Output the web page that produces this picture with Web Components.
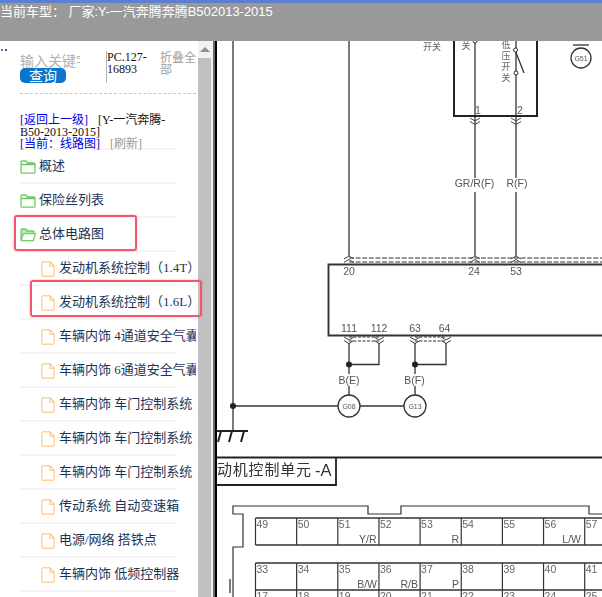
<!DOCTYPE html>
<html lang="zh">
<head>
<meta charset="utf-8">
<title>线路图</title>
<style>
html,body{margin:0;padding:0;background:#fff;height:100%;overflow:hidden}
body{font-family:"Liberation Serif","Noto Sans CJK SC",serif}
</style>
</head>
<body>
<app-shell>
  <top-bar slot="top">当前车型： 厂家:Y-一汽奔腾奔腾B502013-2015</top-bar>
  <side-panel slot="side">
    <tree-item kind="folder">概述</tree-item>
    <tree-item kind="folder">保险丝列表</tree-item>
    <tree-item kind="open" mark="folder">总体电路图</tree-item>
    <tree-item kind="file">发动机系统控制（1.4T）</tree-item>
    <tree-item kind="file" mark="file">发动机系统控制（1.6L）</tree-item>
    <tree-item kind="file">车辆内饰 4通道安全气囊</tree-item>
    <tree-item kind="file">车辆内饰 6通道安全气囊</tree-item>
    <tree-item kind="file">车辆内饰 车门控制系统</tree-item>
    <tree-item kind="file">车辆内饰 车门控制系统</tree-item>
    <tree-item kind="file">车辆内饰 车门控制系统</tree-item>
    <tree-item kind="file">传动系统 自动变速箱</tree-item>
    <tree-item kind="file">电源/网络 搭铁点</tree-item>
    <tree-item kind="file">车辆内饰 低频控制器</tree-item>
  </side-panel>
  <panel-scrollbar slot="bar"></panel-scrollbar>
  <wiring-diagram slot="main"></wiring-diagram>
</app-shell>
<script>
function shadow(el, html){ el.attachShadow({mode:'open'}).innerHTML = html; }

customElements.define('app-shell', class extends HTMLElement{
  constructor(){super();shadow(this,`<style>
    :host{display:grid;width:100%;height:100vh;overflow:hidden;grid-template-columns:198px 15px 2px 2px 1fr;grid-template-rows:41px 1fr}
    .top{grid-column:1/-1;grid-row:1;display:block}
    .side{grid-column:1;grid-row:2;position:relative;z-index:2}
    .g{grid-column:3;grid-row:2;background:#6a6a6a}
    .k{grid-column:4;grid-row:2;background:#000}
    .main{grid-column:5;grid-row:2;min-width:0;overflow:hidden}
    </style>
    <div class="top"><slot name="top"></slot></div>
    <div class="side"><slot name="side"></slot></div>
    <div style="grid-column:2;grid-row:2;min-height:0"><slot name="bar"></slot></div>
    <div class="g"></div><div class="k"></div>
    <div class="main"><slot name="main"></slot></div>`);}
});

customElements.define('top-bar', class extends HTMLElement{
  constructor(){super();shadow(this,`<style>
    :host{display:block;height:41px;box-sizing:border-box;background:#999;border-top:3px solid #5b7fd3;
      color:#fff;font:13px/16px "Liberation Sans","Noto Sans CJK SC",sans-serif;white-space:pre}
    div{padding:1px 0 0 0;letter-spacing:-.02px}
    </style><div><slot></slot></div>`);}
});

customElements.define('side-panel', class extends HTMLElement{
  constructor(){super();shadow(this,`<style>
    :host{display:block;height:100%;background:#fff;font:12px/12px "Liberation Serif","Noto Sans CJK SC",serif}
    .head{display:flex;height:42px;padding-top:10px;box-sizing:content-box}
    .dots{width:20px;flex:none;margin-top:-2px;height:3px;display:flex;gap:2px;padding-left:1px;box-sizing:border-box}
    .dots i{width:2px;height:2px}
    .query{width:60px;flex:none;margin-right:26px;display:flex;flex-direction:column}
    .ph{font:14px/18px "Noto Sans CJK SC",sans-serif;color:#b0b0b0;white-space:nowrap;overflow:hidden;height:17px}
    button{all:unset;display:block;width:46px;height:15px;margin-top:0;border-radius:5px;background:#0a75cd;color:#fff;
      text-align:center;font:14px/15px "Noto Sans CJK SC",sans-serif}
    .pc{width:46px;flex:none;border-left:1px solid #b5b5b5;height:32px;padding-left:0;margin-right:7px;color:#111;font:12px/12px "Liberation Serif",serif;box-sizing:content-box}
    .fold{width:37px;flex:none;color:#a0a0a0;font:12px/12px "Noto Sans CJK SC",sans-serif}
    .dash{margin:0 2px 0 20px;border-top:1px dashed #c8c8c8;height:0}
    .links{margin:20px 0 0 20px;width:150px;height:34px;color:#111}
    .links b{display:inline-block;width:10px}
    a{color:#0000e6;text-decoration:none}
    .mute{color:#999}
    .sep{height:2px;width:156px;margin-left:20px;background:#f5f5f5}
    </style>
    <div class="head">
      <div class="dots"><i style="background:#c0407a"></i><i style="background:#4040c0"></i></div>
      <div class="query"><div class="ph">输入关键字</div><button>查询</button></div>
      <div class="pc">PC.127-16893</div>
      <div class="fold">折叠全部</div>
    </div>
    <div class="dash"></div>
    <div class="links"><a href="#">[返回上一级]</a><b></b>[Y-一汽奔腾-B50-2013-2015]<br><a href="#">[当前：线路图]</a><b></b><span class="mute">[刷新]</span></div>
    <div class="sep"></div>
    <slot></slot>`);}
});

const ICONS = {
 folder:`<svg width="16" height="14" viewBox="0 0 16 14"><path d="M1 3V2a1 1 0 0 1 1-1h4l1.5 2H14a1 1 0 0 1 1 1v8.2a1 1 0 0 1-1 1H2a1 1 0 0 1-1-1V3zM1 4.5h14" fill="#fff" stroke="#6fcb66" stroke-width="1.3" stroke-linejoin="round"/></svg>`,
 open:`<svg width="16" height="14" viewBox="0 0 16 14"><path d="M1 12V2a1 1 0 0 1 1-1h4l1.5 2H13a1 1 0 0 1 1 1v1" fill="#b8e6b2" stroke="#6fcb66" stroke-width="1.3" stroke-linejoin="round"/><path d="M1.2 12.6 3.4 5.6H15.4L13.4 12.6z" fill="#fff" stroke="#6fcb66" stroke-width="1.3" stroke-linejoin="round"/></svg>`,
 file:`<svg width="14" height="16" viewBox="0 0 14 16"><path d="M2 .8H9L13.2 5V14a1.2 1.2 0 0 1-1.2 1.2H2A1.2 1.2 0 0 1 .8 14V2A1.2 1.2 0 0 1 2 .8zM8.8 1V5.2H13" fill="#fff" stroke="#fdd09a" stroke-width="1.4" stroke-linejoin="round"/></svg>`
};

customElements.define('tree-item', class extends HTMLElement{
  constructor(){super();
    const kind=this.getAttribute('kind'), mark=this.getAttribute('mark'), child=kind==='file';
    shadow(this,`<style>
    :host{display:block;font:13px/16px "Liberation Serif","Noto Sans CJK SC",serif;color:#1c3557}
    .row{position:relative;height:32px;width:196px;display:flex;align-items:center;box-sizing:border-box;padding-left:${child?41:20}px;gap:${child?4:3}px}
    svg{flex:none;display:block;margin-top:2px}
    .t{flex:1;min-width:0;overflow:hidden;white-space:nowrap}
    .sep{height:2px;width:156px;margin-left:20px;background:#f5f5f5}
    .mark{position:absolute;border:2.5px solid #f4566c;border-radius:3px;box-shadow:0 0 2px rgba(244,86,108,.6);box-sizing:border-box;pointer-events:none}
    .mark.folder{left:14px;top:-3px;width:123px;height:36px}
    .mark.file{left:30px;top:-6px;width:172px;height:37px}
    </style>
    <div class="row">${ICONS[kind]}<span class="t"><slot></slot></span>${mark?`<div class="mark ${mark}"></div>`:''}</div>
    <div class="sep"></div>`);}
});

customElements.define('panel-scrollbar', class extends HTMLElement{
  constructor(){super();shadow(this,`<style>
    :host{display:flex;flex-direction:column;height:100%;background:#f1f1f1;box-sizing:border-box;padding:0 2px 0 0}
    .up{height:17px;display:flex;align-items:center;justify-content:center}
    .up i{width:0;height:0;border:solid transparent;border-width:0 5px 5px;border-bottom-color:#8f8f8f}
    .thumb{flex:1;background:#c0c0c0}
    </style><div class="up"><i></i></div><div class="thumb"></div>`);}
});

customElements.define('wiring-diagram', class extends HTMLElement{
  constructor(){super();
    const line=(d,w=1.3,c='#333')=>`<path d="${d}" fill="none" stroke="${c}" stroke-width="${w}"/>`;
    const dashed=(d,w=1.1,c='#333',da='4 1.6')=>`<path d="${d}" fill="none" stroke="${c}" stroke-width="${w}" stroke-dasharray="${da}"/>`;
    const txt=(x,y,s,o={})=>`<text x="${x}" y="${y}" font-size="${o.size||10.5}" text-anchor="${o.a||'middle'}" fill="${o.c||'#555'}" font-family="${o.f||'Liberation Sans'}">${s}</text>`;
    const chev=(x,y,up)=>{const d=up?-3:3;return line(`M${x-5} ${y}l5 ${d}l5 ${-d}M${x-5} ${y+3.5}l5 ${d}l5 ${-d}`,1,'#444');};
    const circ=(x,y,r,w=1.3)=>`<circle cx="${x}" cy="${y}" r="${r}" fill="#fff" stroke="#333" stroke-width="${w}"/>`;
    const dot=(x,y,r=3)=>`<circle cx="${x}" cy="${y}" r="${r}" fill="#222"/>`;
    let s='';
    // trunk wires
    s+=line('M233 41V431');
    s+=line('M349 41V256');
    s+=line('M475 41V256');
    s+=line('M516 41V256');
    // switch housing
    s+=line('M454 41V116H537V41',2,'#222');
    s+=txt(432,50,'开关',{f:'Noto Sans CJK SC',size:9,c:'#666'});
    s+=txt(466,49,'关',{f:'Noto Sans CJK SC',size:9,c:'#666'});
    ['低','压','开','关'].forEach((c,i)=>s+=txt(506,48+i*11,c,{f:'Noto Sans CJK SC',size:9,c:'#666'}));
    s+=`<circle cx="475" cy="41" r="2" fill="#fff" stroke="#333"/>`;
    s+=line('M515 50L524 73');
    s+=`<circle cx="515.5" cy="50" r="2" fill="#fff" stroke="#333"/><circle cx="516" cy="73" r="2" fill="#fff" stroke="#333"/>`;
    s+=txt(478,114,'1')+txt(520,114,'2');
    s+=chev(475,118,false)+chev(516,118,false);
    s+=`<rect x="455" y="178" width="40" height="14" fill="#fff"/><rect x="507" y="178" width="20" height="14" fill="#fff"/>`;
    s+=txt(474.5,187,'GR/R(F)')+txt(517,187,'R(F)');
    // G51
    s+=line('M573 45H589')+circ(581,58,10)+txt(581,61,'G51',{size:7});
    // main unit
    s+=dashed('M349 258H602M349 262H602',1.2,'#333','5 1.6');
    s+=line('M602 264.5H328.5V335.5H602',1.9,'#333');
    [349,475,516].forEach(x=>s+=chev(x,259,true));
    s+=txt(349,275,'20')+txt(474,275,'24')+txt(516,275,'53');
    s+=txt(349,332,'111')+txt(379,332,'112')+txt(415,332,'63')+txt(444.5,332,'64');
    s+=dashed('M349 337H379M349 341H379M415 337H446M415 341H446',1.2,'#333','3 1.5');
    [349,379,415,446].forEach(x=>s+=chev(x,337,false));
    s+=line('M349 343V395M379 343V364.5H349')+line('M415 343V395M446 343V364.5H415');
    s+=dot(349,364.5)+dot(415,364.5);
    s+=`<rect x="338" y="374" width="22" height="12" fill="#fff"/><rect x="403" y="374" width="22" height="12" fill="#fff"/>`;
    s+=txt(349,384,'B(E)')+txt(414.5,384,'B(F)');
    // grounds
    s+=line('M233 406H404');
    s+=circ(349,406,11)+circ(415,406,11);
    s+=txt(349,409,'G08',{size:7})+txt(415,409,'G13',{size:7});
    s+=dot(233,406);
    s+=line('M217 431H248M221 431L218 442M232 431L229 442M244 431L241 442',2,'#222');
    // title block
    s+=line('M217 457.5H602',1.8,'#222')+line('M336 457.5V485H217',1.8,'#222');
    s+=`<text x="217" y="475" font-size="15" fill="#333" font-family="Noto Sans CJK SC" textLength="94" lengthAdjust="spacing">动机控制单元</text>`;
    s+=`<text x="315" y="476" font-size="16.5" fill="#333" font-family="Liberation Sans">-A</text>`;
    // connector outline
    s+=line('M233 597V547H243V514H233V506H368V514H401V506H589V514H602',1.2,'#333');
    s+=line('M230 579V593',1.3,'#333');
    // cells
    const X=i=>255.5+41.15*i;
    const row=(top,bot,start)=>{
      s+=line(`M${X(0)} ${top}H602M${X(0)} ${bot}H602`,1.3,'#333');
      for(let i=0;i<9;i++){ s+=line(`M${X(i)} ${top}V${bot}`,1.2,'#333'); s+=txt(X(i)+1,top+9.5,start+i,{a:'start',c:'#666'}); }
    };
    row(518,545,49); row(563,590,33);
    for(let i=0;i<9;i++){ s+=line(`M${X(i)} 590V597`,1.2,'#333'); s+=txt(X(i)+1,600,17+i,{a:'start',c:'#666'}); }
    s+=txt(376.5,543,'Y/R',{a:'end'})+txt(459,543,'R',{a:'end'})+txt(581,543,'L/W',{a:'end'});
    s+=txt(377,588,'B/W',{a:'end'})+txt(418,588,'R/B',{a:'end'})+txt(459,588,'P',{a:'end'});
    shadow(this,`<style>
    :host{display:block;height:556px;background:#fff;overflow:hidden}
    svg{display:block;filter:blur(.35px)}
    </style><svg width="385" height="556" viewBox="217 41 385 556">${s}</svg>`);}
});
</script>
</body>
</html>
